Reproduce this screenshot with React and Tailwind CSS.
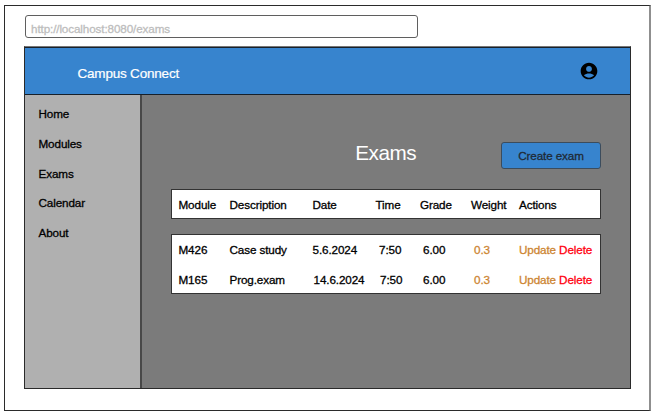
import React from "react";

const NAV = ["Home", "Modules", "Exams", "Calendar", "About"];

const COLUMNS = "grid grid-cols-[51px_82px_64px_44.5px_51px_48px_1fr]";

const ROWS = [
  { module: "M426", description: "Case study", date: "5.6.2024", shift: "pl-px", timeShift: "pl-[3.5px]", time: "7:50", grade: "6.00", weight: "0.3" },
  { module: "M165", description: "Prog.exam", date: "14.6.2024", shift: "pl-[2px]", timeShift: "pl-[4.5px]", time: "7:50", grade: "6.00", weight: "0.3" },
];

function UserIcon() {
  return (
    <svg viewBox="0 0 24 24" className="h-[20px] w-[20px]" fill="#000">
      <path d="M12 2C6.48 2 2 6.48 2 12s4.48 10 10 10 10-4.48 10-10S17.52 2 12 2zm0 4c1.93 0 3.5 1.57 3.5 3.5S13.93 13 12 13s-3.5-1.57-3.5-3.5S10.07 6 12 6zm0 14c-2.03 0-4.43-.82-6.14-2.88C7.55 15.8 9.68 15 12 15s4.45.8 6.14 2.12C16.43 19.18 14.03 20 12 20z" />
    </svg>
  );
}

export default function App() {
  return (
    <div className="h-[414px] w-[654px] overflow-hidden bg-white pl-1 pt-[5px] font-['Liberation_Sans',Arial,sans-serif] text-[11.7px] leading-[14px] tracking-[-0.12px] text-black [-webkit-text-stroke:0.3px]">
      <div className="h-[406px] w-[647px] border border-r-2 border-[#2b2b2b] border-r-[#8f8f8f] pl-[19px] pt-[9px]">
        <div className="ml-px flex h-[23px] w-[393px] items-center rounded-[3px] border border-[#5f5f5f] pl-[5px] pt-[5px] text-[#bdbdbd]">
          http://localhost:8080/exams
        </div>

        <div className="mt-[8px] h-[343px] w-[607px] border border-[#2a2a2a] border-t-[#777]">
          <header className="flex h-[48px] items-center justify-between border-y border-[#17202a] bg-[#3784ce] pl-[52.5px] pr-[31.5px] text-[13.5px] leading-4 tracking-[-0.2px] text-white [-webkit-text-stroke:0.2px]">
            <span className="pt-[5px]">Campus Connect</span>
            <UserIcon />
          </header>

          <div className="flex h-[293px]">
            <nav className="flex w-[117px] flex-col gap-[15.8px] border-r-2 border-[#484848] bg-[#b0b0b0] pl-[13.5px] pt-[12px]">
              {NAV.map((item) => (
                <a key={item}>{item}</a>
              ))}
            </nav>

            <main className="flex-1 bg-[#7b7b7b] pl-[29px] pr-[29px]">
              <div className="flex h-[94px] items-start justify-end">
                <h1 className="mr-[85px] mt-[46px] text-[20.7px] leading-6 tracking-[-0.5px] text-white [-webkit-text-stroke:0px]">Exams</h1>
                <button className="mt-[47px] flex h-[27px] w-[100px] items-center justify-center rounded-[3px] border border-[#3c4c5c] bg-[#3784ce] pt-px text-[#1f2a35]">
                  Create exam
                </button>
              </div>

              <div className={`${COLUMNS} h-[30px] items-center border border-[#333] bg-white pl-[6.5px] pt-px`}>
                <span>Module</span>
                <span>Description</span>
                <span className="pl-px">Date</span>
                <span>Time</span>
                <span>Grade</span>
                <span>Weight</span>
                <span>Actions</span>
              </div>

              <div className="mt-[15px] flex h-[60px] flex-col gap-[16px] border border-[#333] bg-white pl-[6.5px] pt-[8px]">
                {ROWS.map((row) => (
                  <div key={row.module} className={COLUMNS}>
                    <span>{row.module}</span>
                    <span>{row.description}</span>
                    <span className={row.shift}>{row.date}</span>
                    <span className={row.timeShift}>{row.time}</span>
                    <span className="pl-[3px]">{row.grade}</span>
                    <span className="pl-[3px] text-[#cd8532]">{row.weight}</span>
                    <span className="whitespace-nowrap text-[#cd8532]">
                      Update <span className="text-[#ff0010]">Delete</span>
                    </span>
                  </div>
                ))}
              </div>
            </main>
          </div>
        </div>
      </div>
    </div>
  );
}
